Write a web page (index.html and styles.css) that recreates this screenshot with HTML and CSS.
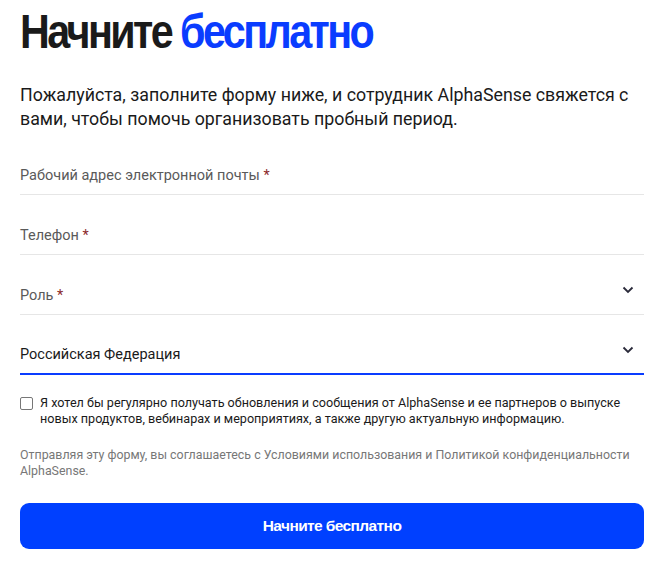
FILE: index.html
```html
<!DOCTYPE html>
<html lang="ru">
<head>
<meta charset="utf-8">
<link rel="stylesheet" href="styles.css">
</head>
<body>
<div class="page">
  <h1 class="title"><span class="title-inner">Начните <span class="accent">бесплатно</span></span></h1>
  <p class="intro">Пожалуйста, заполните форму ниже, и сотрудник AlphaSense свяжется с вами, чтобы помочь организовать пробный период.</p>
  <form class="form">
    <div class="field"><span class="label">Рабочий адрес электронной почты <span class="req">*</span></span></div>
    <div class="field"><span class="label">Телефон <span class="req">*</span></span></div>
    <div class="field select"><span class="label">Роль <span class="req">*</span></span>
      <svg class="chev" width="12" height="8" viewBox="0 0 12 8"><path d="M1.5 1.5 L6 6 L10.5 1.5" fill="none" stroke="#2a2a3a" stroke-width="1.8"/></svg>
    </div>
    <div class="field select active"><span class="value">Российская Федерация</span>
      <svg class="chev" width="12" height="8" viewBox="0 0 12 8"><path d="M1.5 1.5 L6 6 L10.5 1.5" fill="none" stroke="#2a2a3a" stroke-width="1.8"/></svg>
    </div>
    <label class="consent"><span class="box"></span><span class="consent-text">Я хотел бы регулярно получать обновления и сообщения от AlphaSense и ее партнеров о выпуске новых продуктов, вебинарах и мероприятиях, а также другую актуальную информацию.</span></label>
    <p class="legal">Отправляя эту форму, вы соглашаетесь с Условиями использования и Политикой конфиденциальности AlphaSense.</p>
    <button type="button" class="submit">Начните бесплатно</button>
  </form>
</div>
</body>
</html>
```
FILE: styles.css
```css
* { box-sizing: border-box; }
html, body { margin: 0; padding: 0; background: #fff; }
body { font-family: Roboto, "Noto Sans", sans-serif; color: #1a1a1a; }
.page { padding: 8px 17px 0 20px; }
.title {
  margin: 0;
  font-family: "Liberation Sans", Arial, sans-serif;
  font-weight: 700;
  font-size: 48px;
  line-height: 48px;
  letter-spacing: -3px;
  color: #1a1a1a;
  white-space: nowrap;
}
.title-inner {
  display: inline-block;
  transform: scaleX(0.86);
  transform-origin: left center;
}
.accent { color: #0a3cff; }
.intro {
  margin: 27px 0 0;
  font-size: 17.8px;
  line-height: 24px;
  color: #1a1a1a;
}
.form { display: flex; flex-direction: column; margin-top: 18px; }
.field {
  height: 60px;
  border-bottom: 1px solid #e6e6e6;
  display: flex;
  align-items: flex-end;
  justify-content: space-between;
  padding-bottom: 8px;
  position: relative;
}
.field:first-child { height: 46px; }
.label { font-size: 14.5px; line-height: 20px; color: #5a5a5a; }
.req { color: #8b2a2a; }
.value { font-size: 14.5px; line-height: 20px; color: #1a1a1a; }
.active { border-bottom: 2px solid #0a3cff; }
.chev { position: absolute; right: 10px; top: 31px; }
.consent { display: flex; gap: 7px; margin-top: 20px; }
.box {
  flex: 0 0 auto;
  width: 13px; height: 13px;
  border: 1px solid #777;
  border-radius: 2px;
  margin-top: 2px;
}
.consent-text { font-size: 12.6px; line-height: 16px; color: #1a1a1a; }
.legal {
  margin: 20px 0 0;
  font-size: 12.4px;
  line-height: 16px;
  color: #777;
}
.submit {
  margin-top: 24px;
  height: 46px;
  width: 100%;
  border: 0;
  border-radius: 9px;
  background: #0040ff;
  color: #fff;
  font-family: "Liberation Sans", Arial, sans-serif;
  font-weight: 700;
  font-size: 15.5px;
  letter-spacing: -0.6px;
}
```
